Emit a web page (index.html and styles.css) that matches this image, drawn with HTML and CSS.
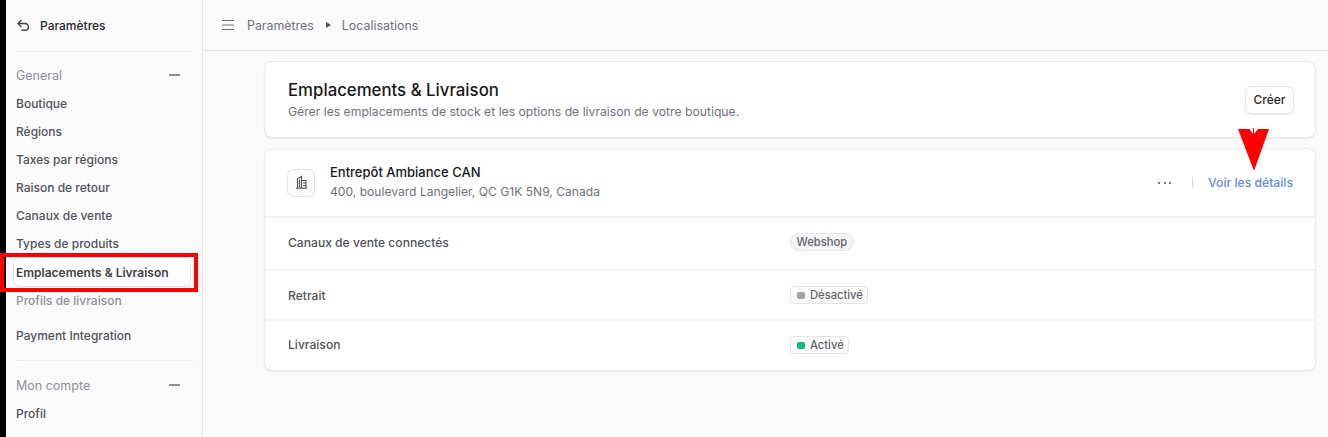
FILE: index.html
```html
<!DOCTYPE html>
<html lang="fr">
<head>
    <meta charset="UTF-8">
    <title>Emplacements &amp; Livraison</title>
    <link rel="stylesheet" href="styles.css">
</head>
<body>
    <div class="page">
        <!-- Sidebar -->
        <aside class="sidebar">
            <div class="side-head">
                <svg class="back-icon" width="15" height="15" viewBox="0 0 15 15" fill="none" stroke="#3f3f46" stroke-width="1.4" stroke-linecap="round" stroke-linejoin="round">
                    <path d="M5 2.5 2 5.5l3 3"/>
                    <path d="M2.3 5.5h6.7a3.4 3.4 0 0 1 0 6.8H6"/>
                </svg>
                <span>Paramètres</span>
            </div>

            <div class="side-group">
                <div class="group-title"><span>General</span><i class="minus"></i></div>
                <a class="side-link" href="#">Boutique</a>
                <a class="side-link" href="#">Régions</a>
                <a class="side-link" href="#">Taxes par régions</a>
                <a class="side-link" href="#">Raison de retour</a>
                <a class="side-link" href="#">Canaux de vente</a>
                <a class="side-link" href="#">Types de produits</a>
                <a class="side-link active" href="#">Emplacements &amp; Livraison</a>
                <a class="side-link muted" href="#">Profils de livraison</a>
                <a class="side-link extra" href="#">Payment Integration</a>
            </div>

            <div class="side-group second">
                <div class="group-title"><span>Mon compte</span><i class="minus"></i></div>
                <a class="side-link" href="#">Profil</a>
            </div>

            <!-- Red annotation box -->
            <div class="red-box"></div>
        </aside>

        <div class="main">
            <header class="topbar">
                <svg width="14" height="12" viewBox="0 0 14 12" fill="none" stroke="#71717a" stroke-width="1.2">
                    <path d="M1 1.5h12M1 6h12M1 10.5h12"/>
                </svg>
                <span class="crumb">Paramètres</span>
                <span class="crumb-sep"></span>
                <span class="crumb">Localisations</span>
            </header>

            <div class="content">
                <section class="card title-card">
                    <div>
                        <h1>Emplacements &amp; Livraison</h1>
                        <p>Gérer les emplacements de stock et les options de livraison de votre boutique.</p>
                    </div>
                    <button type="button" class="btn">Créer</button>
                </section>

                <section class="card">
                    <div class="location">
                        <div class="loc-icon">
                            <svg width="15" height="15" viewBox="0 0 15 15" fill="none" stroke="#52525b" stroke-width="1.1">
                                <path d="M3.500 13V3.500L7.500 1.500V13"/>
                                <path d="M7.500 5.500H12V13"/>
                                <path d="M2 13.200h11"/>
                                <path d="M9 8h3M9 10.500h3M5.500 4.500v8"/>
                            </svg>
                        </div>
                        <div class="loc-text">
                            <h2>Entrepôt Ambiance CAN</h2>
                            <p>400, boulevard Langelier, QC G1K 5N9, Canada</p>
                        </div>
                        <div class="loc-actions">
                            <span class="dots"><i></i><i></i><i></i></span>
                            <span class="divider"></span>
                            <a class="details" href="#">Voir les détails</a>
                        </div>
                    </div>
                    <div class="row first">
                        <span class="row-label">Canaux de vente connectés</span>
                        <span class="tag round">Webshop</span>
                    </div>
                    <div class="row">
                        <span class="row-label">Retrait</span>
                        <span class="tag"><i class="dot grey"></i>Désactivé</span>
                    </div>
                    <div class="row">
                        <span class="row-label">Livraison</span>
                        <span class="tag"><i class="dot green"></i>Activé</span>
                    </div>
                </section>

                <!-- Red annotation arrow -->
                <svg class="red-arrow" width="32" height="43" viewBox="0 0 32 43">
                    <path d="M0 1H11.500L15 6V0H16V6L20 1H31L16 43Z" fill="#ff0000"/>
                </svg>
            </div>
        </div>
    </div>
</body>
</html>
```

FILE: styles.css
```css
* {
    box-sizing: border-box;
}

html, body {
    height: 100%;
}

body {
    margin: 0;
    font-family: Inter, "Liberation Sans", sans-serif;
    font-size: 12px;
    color: #52525b;
    background-color: #fafafa;
    overflow: hidden;
}

.page {
    display: flex;
    height: 100%;
    border-left: 6px solid #000;
}

.sidebar {
    position: relative;
    flex: 0 0 197px;
    padding: 0 8px 0 10px;
    border-right: 1px solid #e4e4e7;
}

.side-head {
    display: flex;
    align-items: center;
    gap: 9px;
    height: 52px;
    padding-bottom: 1px;
    font-weight: 500;
    color: #27272a;
    border-bottom: 1px dotted #e4e4e7;
}

.back-icon {
    flex: none;
}

.side-group {
    padding-top: 9px;
}

.group-title {
    display: flex;
    align-items: center;
    justify-content: space-between;
    height: 28px;
    padding-right: 14px;
    font-size: 12.500px;
    color: #8f8f98;
}

.minus {
    width: 11px;
    height: 2px;
    background-color: #8f8f98;
}

.side-link {
    display: flex;
    align-items: center;
    height: 28px;
    font-weight: 500;
    color: #52525b;
    text-decoration: none;
}

.side-link.active {
    margin: 1px 4px 0 -2px;
    padding-left: 2px;
    color: #3f3f46;
    background-color: #fff;
    border-radius: 6px;
    box-shadow: 0 0 0 1px #e4e4e7;
    font-weight: 600;
}

.side-link.muted {
    color: #8f8f98;
}

.side-link.extra {
    margin-top: 7px;
}

.side-group.second {
    margin-top: 11px;
    padding-top: 10px;
    border-top: 1px dotted #e4e4e7;
}

.red-box {
    position: absolute;
    left: -6px;
    top: 253px;
    width: 198px;
    height: 39px;
    border: 4px solid #ff0000;
}

.main {
    flex: 1;
    min-width: 0;
}

.topbar {
    display: flex;
    align-items: center;
    height: 51px;
    padding-left: 18px;
    border-bottom: 1px solid #e4e4e7;
    font-size: 12.400px;
    color: #71717a;
}

.crumb {
    margin-left: 12px;
}

.crumb-sep {
    width: 0;
    height: 0;
    margin-left: 12px;
    margin-right: -1px;
    border-left: 5px solid #52525b;
    border-top: 3.500px solid transparent;
    border-bottom: 3.500px solid transparent;
}

.content {
    position: relative;
    display: flex;
    flex-direction: column;
    gap: 10px;
    padding: 10px 12px 0 61px;
}

.card {
    background-color: #fff;
    border: 1px solid #e9e9ec;
    border-radius: 8px;
    box-shadow: 0 1px 2px rgba(0, 0, 0, 0.06);
}

.title-card {
    display: flex;
    align-items: center;
    justify-content: space-between;
    height: 77px;
    padding: 0 21px 0 23px;
}

h1 {
    margin: 0 0 3px;
    font-size: 16.800px;
    line-height: 22px;
    font-weight: 500;
    color: #18181b;
}

.title-card p {
    margin: 0;
    font-size: 12.200px;
    line-height: 16px;
    color: #71717a;
}

.btn {
    width: 49px;
    height: 28px;
    padding: 0;
    font: inherit;
    font-weight: 500;
    color: #27272a;
    background-color: #fff;
    border: 1px solid #e4e4e7;
    border-radius: 6px;
    box-shadow: 0 1px 2px rgba(0, 0, 0, 0.08);
}

.location {
    display: flex;
    align-items: center;
    height: 69px;
    padding: 0 22px;
    border-bottom: 2px solid #f0f0f2;
}

.loc-icon {
    display: flex;
    align-items: center;
    justify-content: center;
    width: 28px;
    height: 28px;
    margin-right: 15px;
    background-color: #fafafa;
    border: 1px solid #e4e4e7;
    border-radius: 6px;
}

.loc-text {
    flex: 1;
    padding-bottom: 2px;
}

h2 {
    margin: 0 0 2px;
    font-size: 13px;
    line-height: 17px;
    font-weight: 500;
    color: #18181b;
}

.loc-text p {
    margin: 0;
    font-size: 12.100px;
    line-height: 17px;
    color: #71717a;
}

.loc-actions {
    display: flex;
    align-items: center;
}

.dots {
    display: flex;
    gap: 3.500px;
}

.dots i {
    width: 2px;
    height: 2px;
    background-color: #52525b;
    border-radius: 50%;
}

.divider {
    width: 1px;
    height: 11px;
    margin: 0 15px 0 21px;
    background-color: #d4d4d8;
}

.details {
    font-size: 12.200px;
    font-weight: 500;
    color: #5b8def;
    text-decoration: none;
}

.row {
    display: flex;
    align-items: center;
    height: 50px;
    padding-left: 23px;
    border-bottom: 2px solid #f4f4f5;
}

.row.first {
    height: 53px;
    padding-bottom: 3px;
}

.row:last-child {
    border-bottom: 0;
    height: 49px;
    padding-bottom: 1px;
}

.row:last-child .row-label {
    padding-bottom: 2px;
}

.row-label {
    flex: 0 0 502px;
    font-size: 12.100px;
    font-weight: 500;
    color: #52525b;
}

.tag {
    display: inline-flex;
    align-items: center;
    height: 18px;
    padding: 0 4px 0 6px;
    font-size: 11.200px;
    font-weight: 500;
    color: #63636d;
    background-color: #fafafa;
    border: 1px solid #e4e4e7;
    border-radius: 4px;
}

.tag.round {
    padding: 0 5.500px;
    background-color: #f4f4f5;
    border-radius: 9px;
}

.dot {
    width: 8px;
    height: 7px;
    margin-right: 5px;
    border-radius: 2px;
}

.dot.grey {
    background-color: #a1a1aa;
}

.dot.green {
    background-color: #10b981;
}

.red-arrow {
    position: absolute;
    top: 77px;
    left: 1035px;
}
```
